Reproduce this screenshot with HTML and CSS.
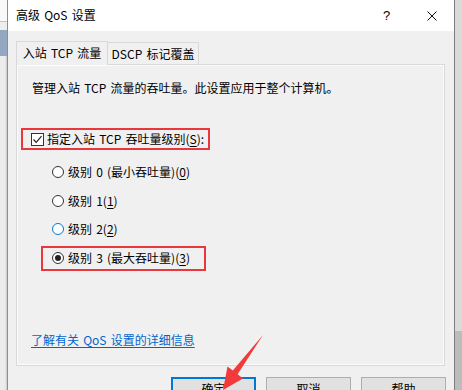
FILE: index.html
```html
<!DOCTYPE html>
<html lang="zh-CN">
<head>
<meta charset="utf-8">
<title>高级 QoS 设置</title>
<link rel="stylesheet" href="styles.css">
</head>
<body>
<div class="screen">
  <div class="desk-left">
    <div class="dl-top"></div>
    <div class="dl-line"></div>
    <div class="dl-mid"></div>
    <div class="dl-blue"></div>
    <div class="dl-rest"></div>
  </div>
  <div class="window">
    <div class="titlebar">
      <span class="title">高级 QoS 设置</span>
      <span class="cap-btn help">?</span>
      <span class="cap-btn close">
        <svg width="10" height="10" viewBox="0 0 10 10"><path d="M0.5 0.5 L9.5 9.5 M9.5 0.5 L0.5 9.5" stroke="#111" stroke-width="1" fill="none"/></svg>
      </span>
    </div>
    <div class="client">
      <div class="tabs">
        <div class="tab tab-active">入站 TCP 流量</div>
        <div class="tab tab-idle">DSCP 标记覆盖</div>
      </div>
      <div class="panel">
        <p class="desc">管理入站 TCP 流量的吞吐量。此设置应用于整个计算机。</p>
        <div class="check-row">
          <span class="checkbox">
            <svg width="11" height="11" viewBox="0 0 11 11"><path d="M1.5 5.5 L4.2 8.3 L9.5 2.2" stroke="#222" stroke-width="1.2" fill="none"/></svg>
          </span>
          <span class="lbl">指定入站 TCP 吞吐量级别(<u>S</u>):</span>
        </div>
        <div class="radios">
          <div class="radio-row"><span class="radio"></span><span class="lbl">级别 0 (最小吞吐量)(<u>0</u>)</span></div>
          <div class="radio-row"><span class="radio"></span><span class="lbl">级别 1(<u>1</u>)</span></div>
          <div class="radio-row"><span class="radio radio-hover"></span><span class="lbl">级别 2(<u>2</u>)</span></div>
          <div class="radio-row radio-marked"><span class="radio radio-on"></span><span class="lbl">级别 3 (最大吞吐量)(<u>3</u>)</span></div>
        </div>
        <a class="link" href="#">了解有关 QoS 设置的详细信息</a>
      </div>
      <div class="buttons">
        <div class="btn btn-default">确定</div>
        <div class="btn">取消</div>
        <div class="btn">帮助</div>
      </div>
    </div>
  </div>
  <div class="desk-right">
    <div class="dr-top"></div>
    <div class="dr-thumb"></div>
  </div>
  <svg class="arrow" width="462" height="390" viewBox="0 0 462 390">
    <polygon points="263,335 237.6,374.2 243,378.5 223,390 227.5,366.5 232.8,370.6" fill="#f23a3a"/>
  </svg>
</div>
</body>
</html>
```

FILE: styles.css
```css
* { box-sizing: border-box; }
html, body { margin: 0; padding: 0; }
body {
  width: 462px;
  height: 390px;
  overflow: hidden;
  font-family: "Noto Sans CJK SC", "Noto Sans", sans-serif;
  font-size: 12px;
  word-spacing: 1.5px;
  color: #000;
}
.screen {
  position: relative;
  display: flex;
  width: 462px;
  height: 390px;
  overflow: hidden;
}
.desk-left {
  width: 7px;
  display: flex;
  flex-direction: column;
}
.dl-top { height: 21px; background: #f8f8f8; }
.dl-line { height: 1px; background: #c4c4c4; }
.dl-mid { height: 8px; background: #eeeeee; }
.dl-blue { height: 26px; background: #93a7c0; }
.dl-rest { flex: 1; background: linear-gradient(to right, #ececec 0, #ececec 5px, #c9c9c9 7px); }

.window {
  width: 448px;
  height: 390px;
  border-left: 1px solid #8d8d8d;
  border-right: 1px solid #7d7d7d;
  display: flex;
  flex-direction: column;
  background: #f0f0f0;
}
.titlebar {
  height: 31px;
  background: #fff;
  display: flex;
  align-items: center;
  padding-left: 8px;
}
.title {
  line-height: 16px;
  margin-top: -1px;
  flex: 1;
}
.cap-btn {
  width: 45px;
  height: 31px;
  display: flex;
  align-items: center;
  justify-content: center;
}
.help {
  font-family: "Liberation Sans", sans-serif;
  font-size: 13px;
  margin-top: -1px;
}
.close svg { display: block; }

.client {
  flex: 1;
  padding: 10px 9px 0 8px;
  display: flex;
  flex-direction: column;
}
.tabs {
  display: flex;
  align-items: flex-end;
  height: 23px;
}
.tab {
  display: flex;
  align-items: center;
  justify-content: center;
  background: #f0f0f0;
  border: 1px solid #d9d9d9;
  line-height: 16px;
  white-space: nowrap;
}
.tab-active {
  width: 92px;
  height: 24px;
  border-bottom: none;
  margin-bottom: -1px;
  position: relative;
  z-index: 1;
  padding-bottom: 1px;
}
.tab-idle {
  width: 92px;
  height: 22px;
  margin-left: -1px;
  border-bottom: none;
  padding-top: 1px;
}
.panel {
  height: 302px;
  border: 1px solid #d9d9d9;
  box-shadow: inset 0 0 0 1px #fcfcfc;
  display: flex;
  flex-direction: column;
}
.desc {
  margin: 15px 0 0 15px;
  line-height: 16px;
}
.check-row {
  margin: 32px 0 0 4px;
  width: 189px;
  height: 22px;
  border: 2px solid #e8383d;
  display: flex;
  align-items: center;
  padding-left: 8px;
}
.checkbox {
  width: 13px;
  height: 13px;
  border: 1px solid #333;
  background: #fff;
  display: flex;
  align-items: center;
  justify-content: center;
  margin-right: 3px;
}
.checkbox svg { display: block; }
.lbl { line-height: 16px; white-space: nowrap; }
.lbl u { text-underline-offset: 2px; }

.radios {
  margin: 9.5px 0 0 24px;
  display: flex;
  flex-direction: column;
  gap: 3.7px;
}
.radio-row {
  width: 165px;
  height: 25px;
  border: 2px solid transparent;
  display: flex;
  align-items: center;
  padding-left: 9px;
}
.radio-marked { border-color: #e8383d; }
.radio {
  width: 12px;
  height: 12px;
  border-radius: 50%;
  border: 1px solid #333;
  background: #fff;
  margin-right: 4px;
  display: flex;
  align-items: center;
  justify-content: center;
}
.radio-hover { border-color: #0078d7; }
.radio-on::after {
  content: "";
  width: 6px;
  height: 6px;
  border-radius: 50%;
  background: #222;
}
.link {
  margin: auto 0 17px 14px;
  line-height: 16px;
  color: #0066cc;
  text-decoration: underline;
  text-underline-offset: 2px;
  align-self: flex-start;
}
.buttons {
  margin-top: 11px;
  margin-right: -1px;
  display: flex;
  justify-content: flex-end;
  gap: 10px;
}
.btn {
  width: 85px;
  height: 23px;
  background: #e1e1e1;
  border: 1px solid #adadad;
  display: flex;
  align-items: center;
  justify-content: center;
  line-height: 16px;
  padding-top: 1px;
}
.btn-default { border: 2px solid #0078d7; }

.desk-right {
  width: 7px;
  display: flex;
  flex-direction: column;
}
.dr-top { height: 331px; background: #dadada; }
.dr-thumb { flex: 1; background: #bcbcbc; }

.arrow {
  position: absolute;
  left: 0;
  top: 0;
  pointer-events: none;
}
```
